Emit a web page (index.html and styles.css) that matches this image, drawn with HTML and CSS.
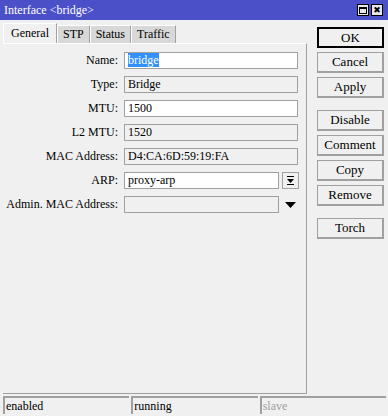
FILE: index.html
```html
<!DOCTYPE html>
<html lang="en">
<head>
    <meta charset="UTF-8">
    <meta name="viewport" content="width=device-width, initial-scale=1.0">
    <title>Interface &lt;bridge&gt;</title>
    <link rel="stylesheet" href="styles.css">
</head>
<body>
    <div id="window">
        <div id="titlebar">
            <span class="title">Interface &lt;bridge&gt;</span>
            <div class="title-buttons">
                <span class="tb-btn"><span class="max-box"></span></span>
                <span class="tb-btn close">&#x2716;</span>
            </div>
        </div>

        <div id="main">
            <div id="left">
                <div id="tabs">
                    <span class="tab active">General</span>
                    <span class="tab">STP</span>
                    <span class="tab">Status</span>
                    <span class="tab">Traffic</span>
                </div>
                <div id="panel">
                    <div class="row">
                        <label>Name:</label>
                        <div class="field"><span class="selected">bridge</span></div>
                    </div>
                    <div class="row">
                        <label>Type:</label>
                        <div class="field ro">Bridge</div>
                    </div>
                    <div class="row">
                        <label>MTU:</label>
                        <div class="field">1500</div>
                    </div>
                    <div class="row">
                        <label>L2 MTU:</label>
                        <div class="field ro">1520</div>
                    </div>
                    <div class="row">
                        <label>MAC Address:</label>
                        <div class="field ro">D4:CA:6D:59:19:FA</div>
                    </div>
                    <div class="row">
                        <label>ARP:</label>
                        <div class="field short">proxy-arp</div>
                        <span class="drop-btn">
                            <svg width="9" height="9" viewBox="0 0 9 9"><rect x="1" y="0" width="7" height="1" fill="#000"/><polygon points="1,3 8,3 4.5,7" fill="#000"/><rect x="1" y="8" width="7" height="1" fill="#000"/></svg>
                        </span>
                    </div>
                    <div class="row">
                        <label>Admin. MAC Address:</label>
                        <div class="field ro short"></div>
                        <span class="drop-arrow">
                            <svg width="11" height="7" viewBox="0 0 11 7"><polygon points="0,0 11,0 5.5,6" fill="#000"/></svg>
                        </span>
                    </div>
                </div>
            </div>

            <div id="buttons">
                <button class="default">OK</button>
                <button>Cancel</button>
                <button>Apply</button>
                <button class="gap">Disable</button>
                <button>Comment</button>
                <button>Copy</button>
                <button>Remove</button>
                <button class="gap">Torch</button>
            </div>
        </div>

        <div id="statusbar">
            <span class="cell">enabled</span>
            <span class="cell">running</span>
            <span class="cell dim">slave</span>
        </div>
    </div>
</body>
</html>
```

FILE: styles.css
```css
body {
    margin: 0;
    font-family: "Liberation Serif", "DejaVu Serif", serif;
    font-size: 12px;
    color: #000;
}

#window {
    width: 388px;
    height: 416px;
    background: #f0f0f0;
    display: flex;
    flex-direction: column;
    box-sizing: border-box;
}

#titlebar {
    height: 20px;
    background: #4b50c9;
    color: #fff;
    display: flex;
    align-items: center;
    justify-content: space-between;
    padding: 0 3px 0 4px;
}

.title {
    font-size: 12px;
    line-height: 20px;
}

.title-buttons {
    display: flex;
    gap: 2px;
    margin-right: 2px;
}

.tb-btn {
    width: 12px;
    height: 12px;
    background: #e8e8e8;
    border: 1px solid #000;
    box-sizing: border-box;
    display: flex;
    align-items: center;
    justify-content: center;
    color: #000;
    font-size: 9px;
    font-family: "DejaVu Sans", sans-serif;
}

.max-box {
    width: 8px;
    height: 7px;
    border: 1px solid #000;
    border-top-width: 2px;
    box-sizing: border-box;
}

#main {
    display: flex;
    flex: 1;
}

#left {
    width: 304px;
    margin-left: 3px;
    display: flex;
    flex-direction: column;
}

#tabs {
    display: flex;
    margin-top: 4px;
    height: 19px;
    align-items: flex-end;
}

.tab {
    height: 17px;
    line-height: 17px;
    padding: 0 5px;
    background: #d8d8d8;
    border-left: 1px solid #fff;
    border-top: 1px solid #fff;
    border-right: 1px solid #a0a0a0;
    white-space: nowrap;
}

.tab.active {
    height: 19px;
    line-height: 19px;
    background: #f0f0f0;
    padding: 0 7px;
}

#panel {
    flex: 1;
    border-right: 1px solid #a0a0a0;
    border-bottom: 1px solid #a0a0a0;
    border-top: 1px solid #fff;
    padding-top: 8px;
    display: flex;
    flex-direction: column;
    gap: 7px;
}

.row {
    display: flex;
    align-items: center;
    height: 17px;
}

.row label {
    width: 115px;
    text-align: right;
    margin-right: 6px;
    white-space: nowrap;
}

.field {
    width: 174px;
    height: 17px;
    box-sizing: border-box;
    border: 1px solid #a0a0a0;
    background: #fff;
    padding: 0 3px;
    line-height: 15px;
    white-space: nowrap;
}

.field.ro {
    background: #f0f0f0;
}

.field.short {
    width: 155px;
}

.selected {
    background: #3390ff;
    color: #fff;
}

.drop-btn {
    width: 17px;
    height: 17px;
    box-sizing: border-box;
    margin-left: 3px;
    border: 1px solid #a0a0a0;
    display: flex;
    align-items: center;
    justify-content: center;
}

.drop-arrow {
    margin-left: 6px;
    display: flex;
    align-items: center;
    padding-top: 2px;
}

#buttons {
    margin-left: 10px;
    margin-top: 7px;
    width: 67px;
    display: flex;
    flex-direction: column;
    gap: 4px;
}

button {
    height: 21px;
    background: #f0f0f0;
    border: 1px solid #a0a0a0;
    border-right: 2px solid #a0a0a0;
    border-bottom: 2px solid #a0a0a0;
    font-family: "Liberation Serif", "DejaVu Serif", serif;
    font-size: 13px;
    padding: 0;
    color: #000;
}

button.default {
    border: 2px solid #000;
}

button.gap {
    margin-top: 8px;
}

#statusbar {
    display: flex;
    gap: 2px;
    padding: 2px 2px 2px 3px;
    height: 18px;
}

.cell {
    flex: 1;
    border-top: 2px solid #a0a0a0;
    border-left: 2px solid #a0a0a0;
    padding-left: 1px;
    font-size: 12px;
    line-height: 16px;
}

.cell.dim {
    color: #a0a0a0;
}
```
